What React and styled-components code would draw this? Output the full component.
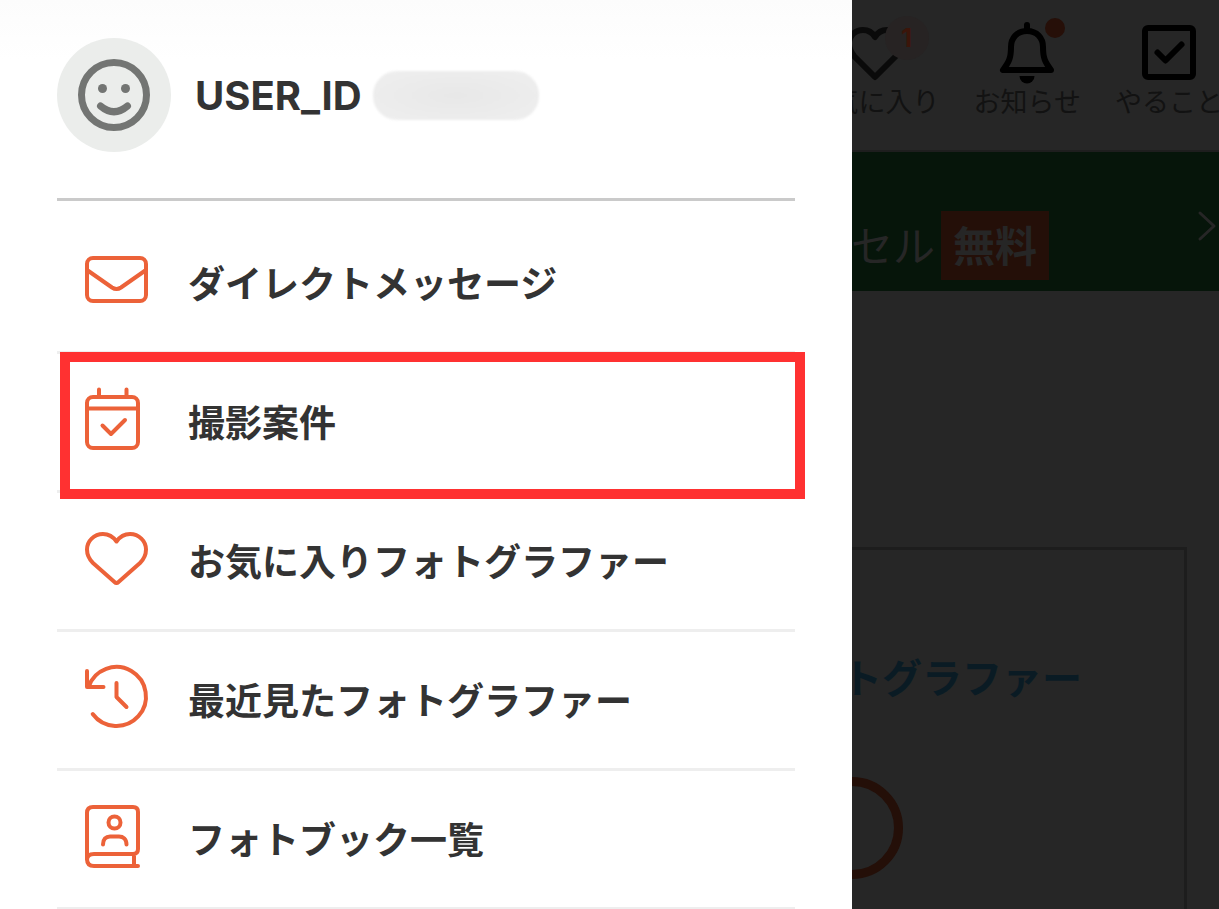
import React from "react";
import styled, { createGlobalStyle } from "styled-components";

const GlobalStyle = createGlobalStyle`
  *, *::before, *::after { box-sizing: border-box; }
  body {
    margin: 0;
    background: #262626;
    font-family: Inter, "Noto Sans CJK JP", sans-serif;
  }
  svg { display: block; flex: none; overflow: visible; }
`;

const Screen = styled.div`
  display: grid;
  grid-template-columns: calc(70% - 1px) minmax(0, 1fr);
  height: 100vh;
  overflow: hidden;
`;

/* Drawer */
const Drawer = styled.aside`
  padding: 38px 57px 0;
  background: linear-gradient(#fcfcfc, #ffffff 60px);
  color: #333333;
`;

const Profile = styled.header`
  display: flex;
  align-items: center;
  padding-bottom: 46px;
  border-bottom: 3px solid #cacaca;
`;

const Avatar = styled.div`
  display: grid;
  place-items: center;
  width: 114px;
  height: 114px;
  margin-right: 24px;
  border-radius: 50%;
  background: #ebedeb;
  color: #737573;
`;

const UserName = styled.h1`
  margin: 0;
  padding-top: 2px;
  font-size: 40px;
  line-height: 48px;
  font-weight: 700;
`;

const HiddenId = styled.span`
  width: 166px;
  height: 49px;
  margin-left: 11px;
  border-radius: 24px;
  background: radial-gradient(ellipse, #e8e8e8, #efefef);
  filter: blur(1px);
`;

const MenuList = styled.ul`
  margin: 0;
  padding: 14px 0 0;
  list-style: none;
`;

const MenuItem = styled.li`
  position: relative;
  border-bottom: 3px solid #eeeeee;
`;

const MenuLink = styled.a`
  display: flex;
  align-items: center;
  gap: 40px;
  height: 136px;
  padding: 4px 0 0 28px;
  color: #333333;
  font-size: 37px;
  line-height: 56px;
  font-weight: 700;
  text-decoration: none;
  white-space: nowrap;

  svg {
    margin-bottom: 12px;
    color: #ec6239;
  }
`;

const Highlight = styled.span`
  position: absolute;
  z-index: 1;
  inset: -2px -10px -9px 3px;
  border: 10px solid #ff3131;
  pointer-events: none;
`;

/* Dimmed page behind the drawer */
const Backdrop = styled.main`
  display: flex;
  flex-direction: column;
  overflow: hidden;
  background: #262626;
`;

const TopBar = styled.nav`
  display: flex;
  justify-content: flex-end;
  gap: 34px;
  height: 152px;
  margin-right: -4px;
  padding-top: 20px;
  border-bottom: 2px solid #1e1e1e;
`;

const TopButton = styled.button`
  position: relative;
  display: flex;
  flex: none;
  flex-direction: column;
  align-items: center;
  height: 100px;
  padding: 0;
  border: 0;
  background: none;
  color: #000000;
  font: inherit;
`;

const TopLabel = styled.span`
  color: #121212;
  font-size: 27px;
  line-height: 38px;
  white-space: nowrap;
`;

const CountBadge = styled.span`
  position: absolute;
  top: -4px;
  right: 11px;
  width: 44px;
  height: 44px;
  border-radius: 50%;
  background: #272323;
  color: #3c150a;
  font-size: 26px;
  line-height: 44px;
  font-weight: 700;
  text-align: center;
`;

const DotBadge = styled.span`
  position: absolute;
  top: -2px;
  right: 16px;
  width: 20px;
  height: 20px;
  border-radius: 50%;
  background: #260f08;
`;

const Banner = styled.a`
  display: flex;
  align-items: flex-start;
  justify-content: flex-end;
  height: 139px;
  padding: 59px 3px 0 0;
  background: #06150a;
  color: #262626;
  font-size: 42px;
  line-height: 72px;
  text-decoration: none;
  white-space: nowrap;
`;

const FreeTag = styled.strong`
  height: 69px;
  margin: 0 149px 0 6px;
  padding: 0 12px;
  background: #240f08;
  font-weight: 700;
`;

const Card = styled.section`
  display: flex;
  flex: 1;
  flex-direction: column;
  align-items: flex-end;
  margin: 256px 32px 0 0;
  padding-top: 99px;
  border: solid #1d1d1d;
  border-width: 3px 3px 0 0;
`;

const CardTitle = styled.h2`
  margin: 0 102px 0 0;
  color: #0a1b24;
  font-size: 40px;
  line-height: 60px;
  font-weight: 700;
  white-space: nowrap;
`;

const Ring = styled.div`
  width: 102px;
  height: 102px;
  margin: 68px 281px 0 0;
  border: 9px solid #240f08;
  border-radius: 50%;
`;

function MenuIcon({ children }) {
  return (
    <svg
      width="63"
      height="63"
      viewBox="0 0 63 63"
      fill="none"
      stroke="currentColor"
      strokeWidth="4"
      strokeLinecap="round"
      strokeLinejoin="round"
      aria-hidden="true"
    >
      {children}
    </svg>
  );
}

function TopIcon({ children }) {
  return (
    <svg
      width="54"
      height="64"
      viewBox="0 0 54 64"
      fill="none"
      stroke="currentColor"
      strokeWidth="6"
      strokeLinecap="round"
      strokeLinejoin="round"
      aria-hidden="true"
    >
      {children}
    </svg>
  );
}

const menu = [
  {
    label: "ダイレクトメッセージ",
    icon: (
      <>
        <rect x="2" y="10" width="59" height="43" rx="6" />
        <path d="M2 22 27 39.5Q31.500 42.500 36 39.500L61 22" />
      </>
    ),
  },
  {
    label: "撮影案件",
    highlighted: true,
    icon: (
      <>
        <rect x="2" y="10" width="51" height="51" rx="6" />
        <path d="M2 21.500H53M14 2.500V10M41.500 2.500V10M17.500 38.500 26 47 40 33" />
      </>
    ),
  },
  {
    label: "お気に入りフォトグラファー",
    icon: (
      <path d="M31.500 15.500C28 10.500 23 8 18 8C9 8 2 15 2 23.500C2 29 4 33 8 37L29.500 56Q31.500 58 33.500 56L55 37C59 33 61 29 61 23.500C61 15 54 8 45 8C40 8 35 10.500 31.500 15.500Z" />
    ),
  },
  {
    label: "最近見たフォトグラファー",
    icon: (
      <path d="M2 6V22H18.500M3.500 22A29.500 29.500 0 1 1 7.700 49M31.500 18V32L41.500 42" />
    ),
  },
  {
    label: "フォトブック一覧",
    icon: (
      <>
        <path d="M53 62H9Q2 62 2 55V9Q2 3 8 3H48Q53 3 53 8V45Q53 50 48 50H9Q2 50 2 56M49 50V62" />
        <circle cx="29.500" cy="18.500" r="6" />
        <path d="M18 40.500C18 35 21 32.500 25 32.500H34C38 32.500 41.500 35 41.500 40.500" />
      </>
    ),
  },
];

export default function App() {
  return (
    <>
      <GlobalStyle />
      <Screen>
        <Drawer>
          <Profile>
            <Avatar>
              <svg width="72" height="72" viewBox="0 0 72 72" fill="none" stroke="currentColor" strokeWidth="7" strokeLinecap="round" aria-hidden="true">
                <circle cx="36" cy="36" r="32.500" />
                <circle cx="24.500" cy="29.500" r="4.500" fill="currentColor" stroke="none" />
                <circle cx="47.500" cy="29.500" r="4.500" fill="currentColor" stroke="none" />
                <path d="M22.500 47Q36 58.500 49.500 47" />
              </svg>
            </Avatar>
            <UserName>USER_ID</UserName>
            <HiddenId />
          </Profile>
          <nav>
            <MenuList>
              {menu.map((item) => (
                <MenuItem key={item.label}>
                  <MenuLink href="#">
                    <MenuIcon>{item.icon}</MenuIcon>
                    {item.label}
                  </MenuLink>
                  {item.highlighted && <Highlight />}
                </MenuItem>
              ))}
            </MenuList>
          </nav>
        </Drawer>

        <Backdrop>
          <TopBar>
            <TopButton type="button">
              <TopIcon>
                <path stroke="#0a0a0a" d="M30 17C27 12 23 10 18 10C10 10 4 16 4 24C4 29 6 32 9 36L30 57L51 36C54 32 56 29 56 24C56 16 50 10 42 10C37 10 33 12 30 17Z" />
              </TopIcon>
              <TopLabel>お気に入り</TopLabel>
              <CountBadge>1</CountBadge>
            </TopButton>
            <TopButton type="button">
              <TopIcon>
                <path d="M27 5V10M27 11C17 11 11 18 11 27C11 38 9 42 3 50H51C45 42 43 38 43 27C43 18 37 11 27 11Z" />
                <path d="M19.500 56H34.500A7.500 7.500 0 0 1 19.500 56Z" fill="currentColor" stroke="none" />
              </TopIcon>
              <TopLabel>お知らせ</TopLabel>
              <DotBadge />
            </TopButton>
            <TopButton type="button">
              <TopIcon>
                <rect x="3" y="8" width="48" height="49" rx="3" />
                <path d="M15.500 32.500 23.500 40.500 39.500 24.500" />
              </TopIcon>
              <TopLabel>やること</TopLabel>
            </TopButton>
          </TopBar>
          <Banner href="#">
            キャンセル
            <FreeTag>無料</FreeTag>
            <svg width="18" height="30" viewBox="0 0 18 30" fill="none" stroke="currentColor" strokeWidth="3" strokeLinecap="round" strokeLinejoin="round" aria-hidden="true">
              <path d="M2 2 16 15 2 28" />
            </svg>
          </Banner>
          <Card>
            <CardTitle>フォトグラファー</CardTitle>
            <Ring />
          </Card>
        </Backdrop>
      </Screen>
    </>
  );
}
